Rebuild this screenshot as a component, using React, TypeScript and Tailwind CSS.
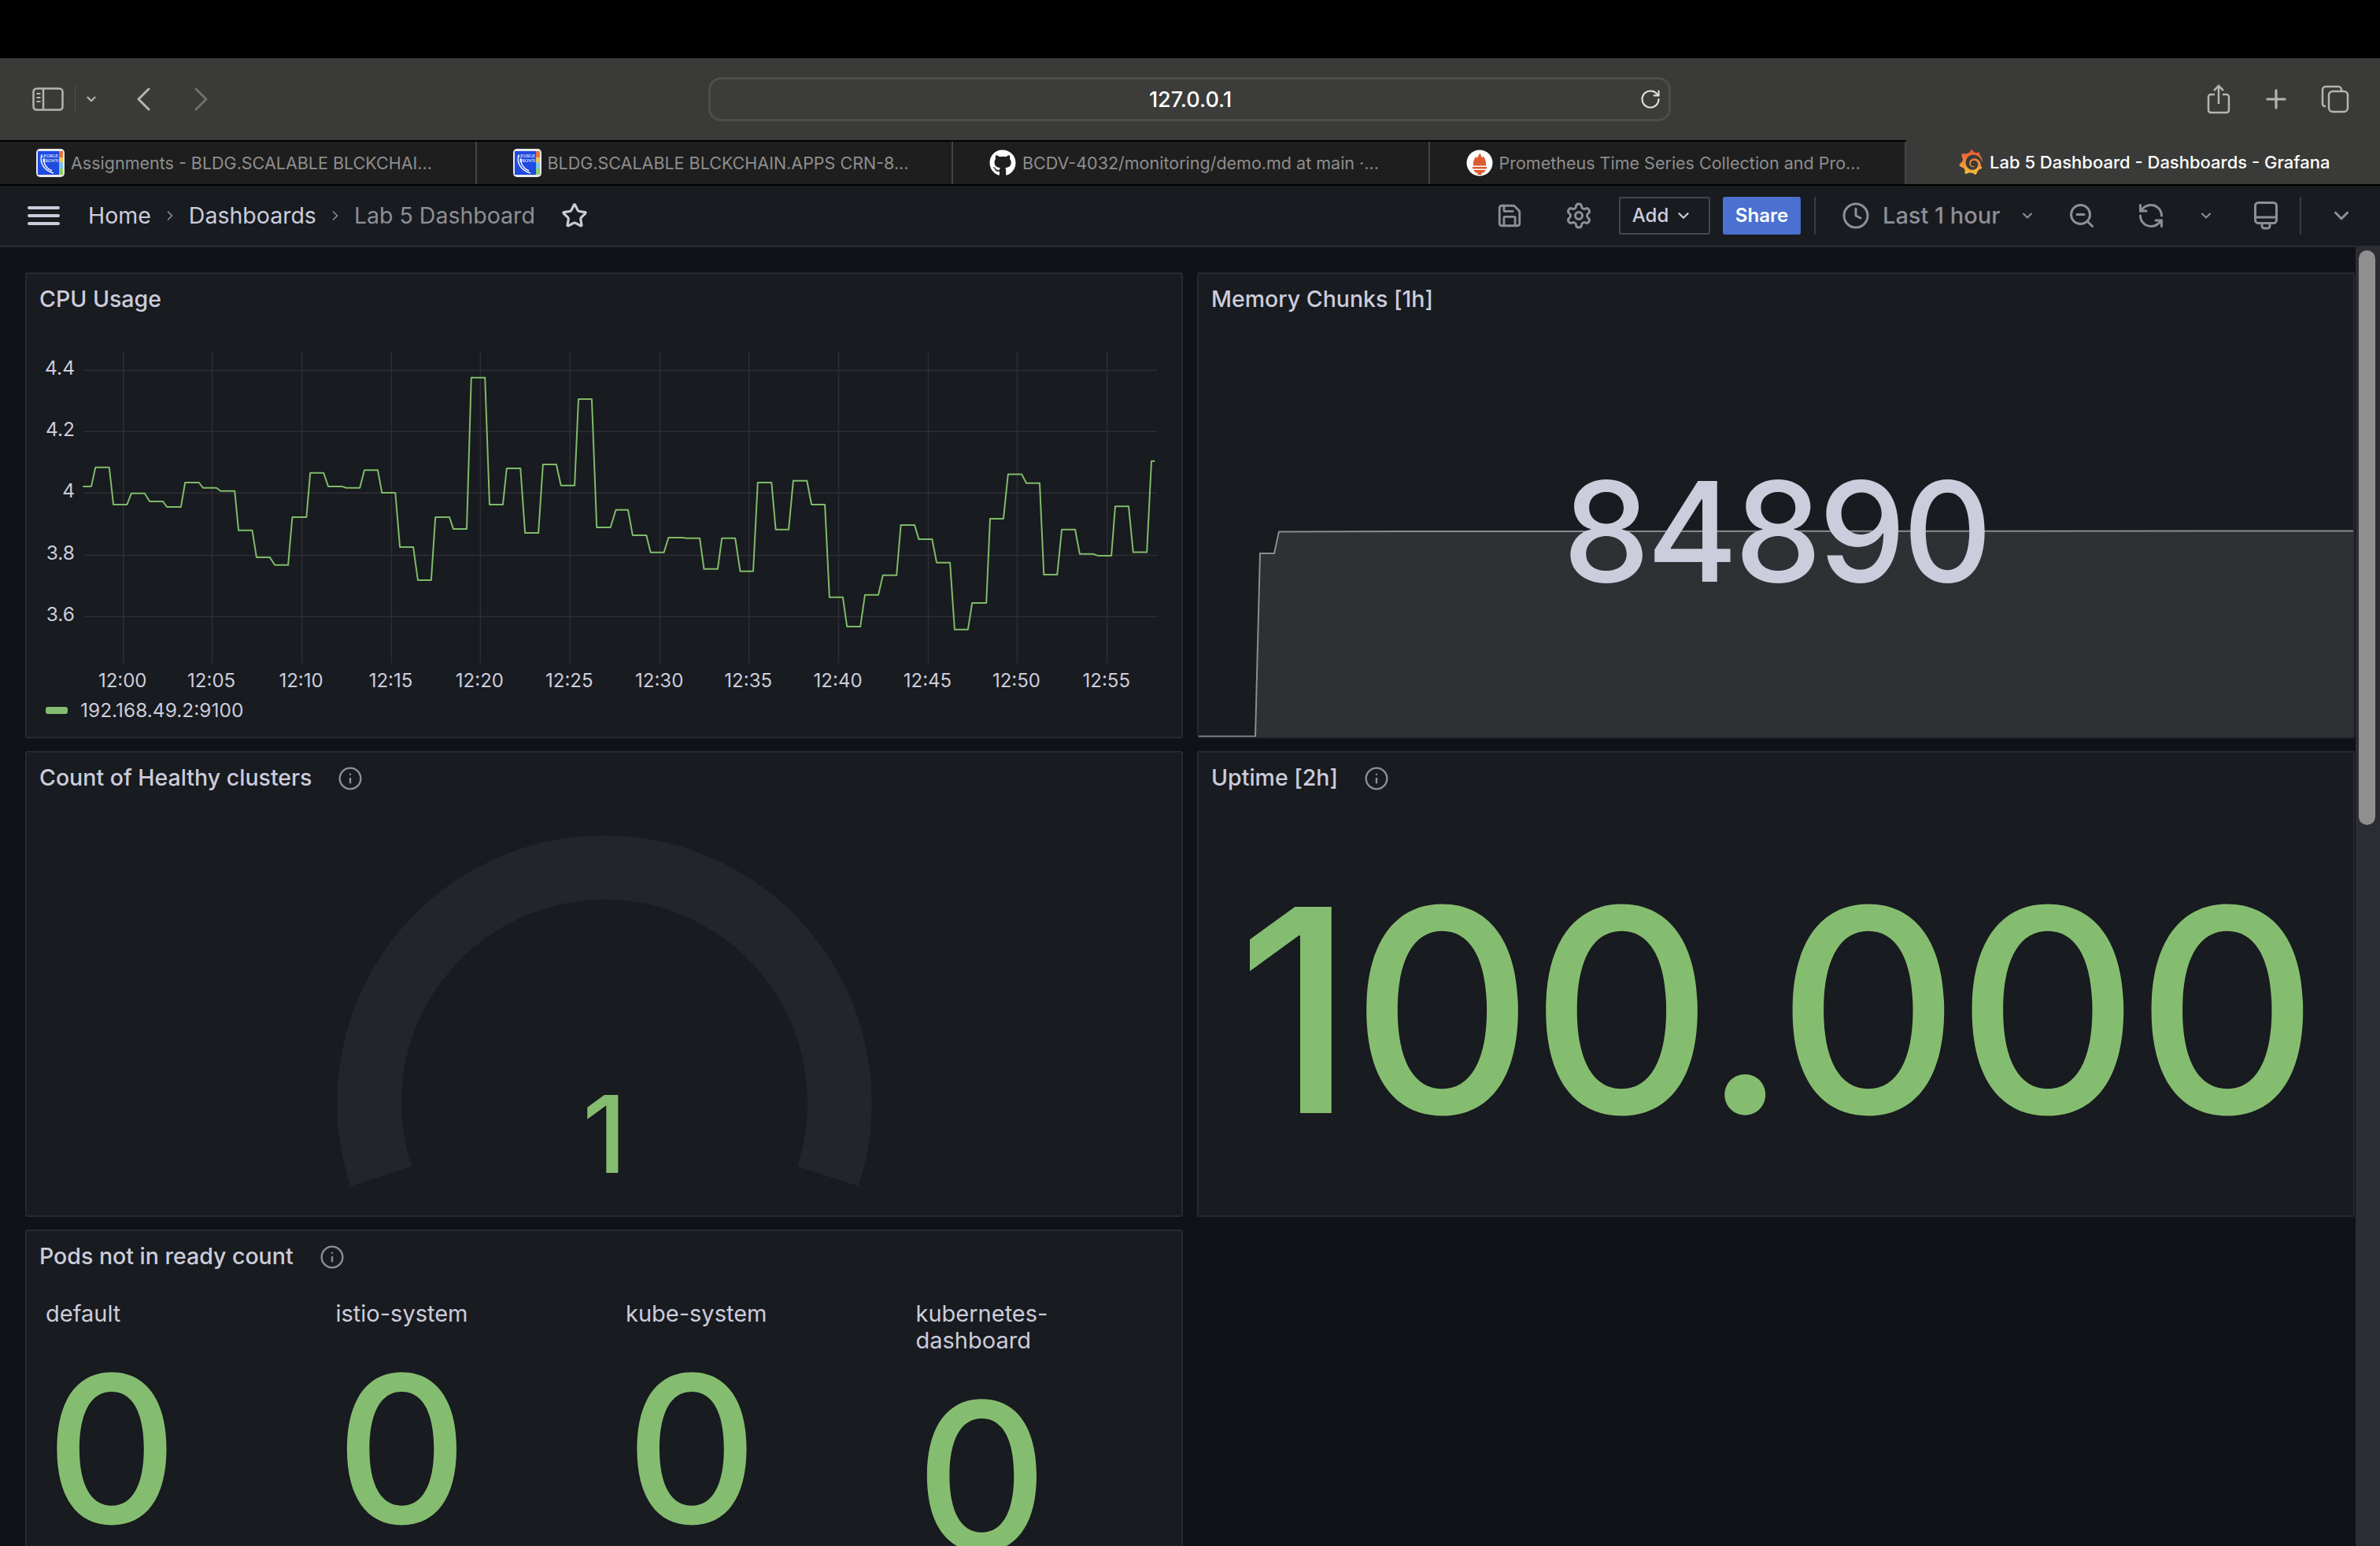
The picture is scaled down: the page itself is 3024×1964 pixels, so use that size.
import { ChevronDown, ChevronRight, Clock, Info, Plus, RefreshCcw, RotateCw, Save, Settings, Star, ZoomOut } from 'lucide-react';
import type { ReactNode } from 'react';
import { FaGithub } from 'react-icons/fa';
import { SiGrafana } from 'react-icons/si';

const GREEN = '#85bd70';

// traced from the cpu graph, measured on the 2.063 x 2.613 crops
const cpuLeft = [176,721,198,721,209,658,245,658,256,781,292,781,303,744,338,744,351,771,386,771,396,789,433,789,444,708,480,708,491,726,526,726,537,736,574,736,584,867,620,867,631,956,666,956,679,982,714,982,725,823,762,823,772,676,807,676,819,721,855,721,866,726,902,726,914,667,949,667,960,742,995,742,1007,922,1042,922,1054,1032,1089,1032,1100,823,1137,823,1147,862,1182,862,1194,360,1230,360,1242,781,1277,781,1287,661,1323,661,1335,875,1370,875,1382,648,1417,648,1429,718,1465,718,1475,431,1510,431,1523,857,1559,857];
const cpuRight = [5,799,37,799,49,883,85,883,96,940,131,940,143,891,180,891,190,893,225,893,236,995,272,995,283,893,318,893,331,1003,365,1003,377,708,413,708,424,864,458,864,470,702,506,702,518,781,553,781,565,1089,600,1089,611,1186,646,1186,658,1081,693,1081,705,1016,741,1016,752,849,788,849,799,896,834,896,846,974,881,974,893,1196,928,1196,939,1108,976,1108,986,828,1021,828,1033,681,1069,681,1081,710,1116,710,1127,1014,1162,1014,1174,864,1209,864,1221,945,1256,945,1268,951,1304,951,1314,787,1349,787,1361,939,1397,939,1409,637,1418,637];

const toX = (z: number) => +(20 + z / 2.063).toFixed(1);
const toY = (z: number) => +(340 + z / 2.613).toFixed(1);

function cpuPoints() {
  const out: string[] = [];
  for (let i = 0; i < cpuLeft.length; i += 2) out.push(`${toX(cpuLeft[i])},${toY(cpuLeft[i + 1])}`);
  for (let i = 0; i < cpuRight.length; i += 2) out.push(`${toX(cpuRight[i] + 1568)},${toY(cpuRight[i + 1])}`);
  return out.join(' ');
}

const yTicks = [
  { label: '4.4', z: 336 },
  { label: '4.2', z: 539 },
  { label: '4', z: 743 },
  { label: '3.8', z: 950 },
  { label: '3.6', z: 1153 },
];
const xTicks = [
  ['12:00', 282], ['12:05', 515], ['12:10', 750], ['12:15', 985], ['12:20', 1218], ['12:25', 1453],
  ['12:30', 1689], ['12:35', 1922], ['12:40', 2157], ['12:45', 2392], ['12:50', 2625], ['12:55', 2861],
] as const;

const tabs = [
  { title: 'Assignments - BLDG.SCALABLE BLCKCHAI...', icon: <GeorgeBrown /> },
  { title: 'BLDG.SCALABLE BLCKCHAIN.APPS CRN-8...', icon: <GeorgeBrown /> },
  { title: 'BCDV-4032/monitoring/demo.md at main ·...', icon: <FaGithub size={34} color="#fff" /> },
  { title: 'Prometheus Time Series Collection and Pro...', icon: <PrometheusLogo /> },
];

function GeorgeBrown() {
  return (
    <svg width="36" height="36" viewBox="0 0 36 36" className="shrink-0">
      <rect width="36" height="36" rx="5" fill="#e8e8e8" />
      <rect x="2" y="3" width="27" height="30" fill="#1f4be0" />
      <rect x="29" y="3" width="5" height="8" fill="#e8743a" />
      <rect x="29" y="11" width="5" height="6" fill="#e9c64a" />
      <rect x="29" y="17" width="5" height="8" fill="#7fc4ee" />
      <rect x="29" y="25" width="5" height="8" fill="#8ed06a" />
      <path d="M7 8c-3 9 2 19 15 23M10 12c-1 7 3 13 10 16" fill="none" stroke="#fff" strokeWidth="1.4" />
      <text x="17" y="11" textAnchor="middle" fontSize="5.5" fontFamily="Liberation Serif, serif" fill="#fff">GEORGE</text>
      <text x="18" y="17" textAnchor="middle" fontSize="5.5" fontFamily="Liberation Serif, serif" fill="#fff">BROWN</text>
    </svg>
  );
}

function PrometheusLogo() {
  return (
    <svg width="34" height="34" viewBox="0 0 34 34" className="shrink-0">
      <circle cx="17" cy="17" r="16.5" fill="#fff" />
      <path d="M17 4c1 3 2.500 3.500 3 6.500 1-.5 1.500-1.500 1.500-2.500 2 3 4 6 3.500 12.500H9c-.5-6 1.500-9 3.500-12 0 1 .5 2 1 2.500C15 8 17 7 17 4z" fill="#dd5b32" />
      <rect x="8" y="22" width="18" height="2.500" fill="#dd5b32" />
      <path d="M9 26h16l-3 3.500h-2.500V32h-5v-2.500H12z" fill="#dd5b32" />
    </svg>
  );
}

function SafariChevron({ flip, className }: { flip?: boolean; className?: string }) {
  return (
    <svg width="18" height="30" viewBox="0 0 18 30" fill="none" stroke="currentColor" strokeWidth="3" strokeLinecap="round" strokeLinejoin="round" className={className}>
      <path d={flip ? 'M3 2l13 13L3 28' : 'M15 2L2 15l13 13'} />
    </svg>
  );
}

function Panel({ title, info, children }: { title: string; info?: boolean; children?: ReactNode }) {
  return (
    <section className="relative flex h-[592px] flex-col overflow-hidden rounded-[3px] border-2 border-[#27292e] bg-[#181b1f]">
      <header className="relative z-10 flex h-[65px] shrink-0 items-center pl-4 text-[28.500px] font-medium text-[#ccccdc]">
        <span>{title}</span>
        {info && <Info size={32} strokeWidth={1.8} className="ml-[33px] text-[#8e8e98]" />}
      </header>
      {children}
    </section>
  );
}

function CpuChart() {
  return (
    <>
      <svg viewBox="34 411 1467 469" className="block h-[469px] w-[1467px] shrink-0 [font-family:Inter,sans-serif]">
        {yTicks.map((t) => (
          <g key={t.label}>
            <line x1={toX(178)} x2={toX(2993)} y1={toY(t.z)} y2={toY(t.z)} stroke="#2d2f34" strokeWidth="1.5" />
            <text x="95" y={toY(t.z)} dy="5.500" textAnchor="end" fontSize="24.500" fill="#ccccdc">{t.label}</text>
          </g>
        ))}
        {xTicks.map(([label, z]) => (
          <g key={label}>
            <line x1={toX(z)} x2={toX(z)} y1={toY(272)} y2={toY(1308)} stroke="#2d2f34" strokeWidth="1.5" />
            <text x={toX(z) - 1} y="871" textAnchor="middle" fontSize="24" fill="#ccccdc">{label}</text>
          </g>
        ))}
        <polyline points={cpuPoints()} fill="none" stroke="#7fbb6a" strokeWidth="2" strokeLinejoin="round" />
      </svg>
      <div className="flex items-center pl-6 text-[24.500px] leading-[40px] text-[#ccccdc]">
        <span className="h-[9px] w-[28px] rounded-[3px] bg-[#85bd70]" />
        <span className="ml-4">192.168.49.2:9100</span>
      </div>
    </>
  );
}

function MemorySpark() {
  return (
    <svg viewBox="1522 348 1468 588" className="absolute left-0 top-0 h-[588px] w-[1468px]">
      <path d="M1521 935.500H1594L1600 703H1618L1624 675.500L1792 675L2991 674.500V936H1521Z" fill="#2f3034" />
      <path d="M1521 935.500H1594L1600 703H1618L1624 675.500L1792 675L2991 674.500" fill="none" stroke="#8b8c8f" strokeWidth="2" />
    </svg>
  );
}

function Gauge() {
  return (
    <svg viewBox="34 1019 1467 525" className="block h-[525px] w-[1467px] [font-family:Inter,sans-serif]">
      <path d="M483 1494A300 300 0 1 1 1053 1494" fill="none" stroke="#22252a" strokeWidth="82" />
      <text x="768" y="1490" textAnchor="middle" fontSize="136" fontWeight="500" fill={GREEN}>1</text>
    </svg>
  );
}

function PodStat({ name }: { name: string }) {
  return (
    <div>
      <div className="w-[200px] text-[29px] leading-[34px] text-[#ccccdc]">{name}</div>
      <div className="mt-[25px] text-[260px] font-medium leading-none" style={{ color: GREEN }}>0</div>
    </div>
  );
}

export default function App() {
  return (
    <div className="flex h-[1964px] w-[3024px] flex-col overflow-hidden bg-[#111217] [font-family:Inter,sans-serif]">
      <svg className="absolute h-0 w-0">
        <defs>
          <linearGradient id="grafana-fill" x1="0" y1="0" x2="0" y2="1">
            <stop offset="0" stopColor="#e8532f" />
            <stop offset="1" stopColor="#f6c23c" />
          </linearGradient>
        </defs>
      </svg>

      <div className="h-[74px] shrink-0 bg-black" />

      {/* safari toolbar */}
      <div className="flex h-[104px] shrink-0 items-center bg-[#3a3a38] text-[#b4b4b2]">
        <div className="flex w-[900px] items-center pl-[41px]">
          <svg width="40" height="30" viewBox="0 0 40 30" fill="none" stroke="#b4b4b2" strokeWidth="2.5">
            <rect x="1.500" y="1.500" width="37" height="27" rx="4" />
            <path d="M14 2v26" />
            <path d="M5.500 8h5M5.500 13h5M5.500 18h5" strokeWidth="2" />
          </svg>
          <span className="ml-[14px] h-[36px] w-[1px] bg-[#4e4e4c]" />
          <ChevronDown size={18} strokeWidth={3} className="ml-[11px]" />
          <SafariChevron className="ml-[49px]" />
          <SafariChevron flip className="ml-[54px] text-[#70706e]" />
        </div>
        <div className="relative flex h-[56px] w-[1223px] items-center justify-center rounded-[16px] border-[3px] border-[#4d4d4b] bg-[#3c3c3a] pl-[2px] pt-[2px] text-[27px] font-medium text-white">
          127.0.0.1
          <RotateCw size={28} strokeWidth={1.8} className="absolute right-[9px] top-[11px] text-[#dededc]" />
        </div>
        <div className="flex flex-1 items-center pl-[681px]">
          <svg width="30" height="38" viewBox="0 0 30 38" fill="none" stroke="#b4b4b2" strokeWidth="2.5">
            <path d="M10 13H5a3 3 0 0 0-3 3v17a3 3 0 0 0 3 3h20a3 3 0 0 0 3-3V16a3 3 0 0 0-3-3h-5" />
            <path d="M15 25V2M9 8l6-6 6 6" />
          </svg>
          <Plus size={38} strokeWidth={2} className="ml-[39px]" />
          <svg width="36" height="36" viewBox="0 0 36 36" fill="none" stroke="#b4b4b2" strokeWidth="2.5" className="ml-[38px]">
            <rect x="10" y="8" width="24" height="26" rx="5" />
            <path d="M6 27H5a3 3 0 0 1-3-3V6a4 4 0 0 1 4-4h16a4 4 0 0 1 4 4v1" />
          </svg>
        </div>
      </div>

      {/* tab strip */}
      <div className="flex h-[56px] shrink-0 border-t-2 border-black bg-[#1e1e1e] text-[22px]">
        {tabs.map((t) => (
          <div key={t.title} className="flex w-[605.500px] items-center border-r-2 border-[#444] pl-[46px] text-[21.500px] text-[#8e8e8e]">
            {t.icon}
            <span className="ml-2 whitespace-nowrap">{t.title}</span>
          </div>
        ))}
        <div className="-mt-[2px] flex flex-1 items-center bg-[#3a3a38] pl-[66px] font-medium text-white">
          <SiGrafana size={32} fill="url(#grafana-fill)" />
          <span className="ml-2 whitespace-nowrap">Lab 5 Dashboard - Dashboards - Grafana</span>
        </div>
      </div>

      {/* grafana nav */}
      <div className="flex h-[80px] shrink-0 items-center border-b-2 border-t-2 border-[#000] border-b-[#2a2c31] bg-[#181b1f] text-[28.500px] text-[#ccccdc]">
        <div className="flex w-[1904px] items-center pl-[35px]">
          <span className="flex h-[24px] w-[41px] flex-col justify-between">
            <i className="h-[4px] rounded-sm bg-[#ccccdc]" />
            <i className="h-[4px] rounded-sm bg-[#ccccdc]" />
            <i className="h-[4px] rounded-sm bg-[#ccccdc]" />
          </span>
          <span className="ml-[36px]">Home</span>
          <ChevronRight size={20} className="mx-[14px] text-[#8e8e98]" />
          <span>Dashboards</span>
          <ChevronRight size={20} className="mx-[14px] text-[#8e8e98]" />
          <span className="text-[#8e8e98]">Lab 5 Dashboard</span>
          <Star size={34} strokeWidth={2.2} className="ml-[33px] text-[#ccccdc]" />
        </div>
        <div className="flex flex-1 items-center text-[#8e8e98]">
          <Save size={34} strokeWidth={2} className="-mx-[3px]" />
          <Settings size={36} strokeWidth={2} className="-mx-[3px] ml-[56px]" />
          <div className="ml-[36px] flex h-[48px] w-[116px] items-center justify-center gap-[8px] rounded-[3px] border-2 border-[#46474c] pr-[6px] text-[24px] font-medium text-[#ccccdc]">
            Add <ChevronDown size={22} strokeWidth={2.5} />
          </div>
          <div className="ml-[16px] flex h-[48px] w-[99px] items-center justify-center rounded-[3px] bg-[#4a70d0] text-[24px] font-semibold text-white">Share</div>
          <span className="ml-[17px] h-[48px] w-[2px] bg-[#3a3c41]" />
          <Clock size={36} strokeWidth={2} className="-mx-[3px] ml-[33px]" />
          <span className="ml-[19px] text-[29px] font-medium">Last 1 hour</span>
          <ChevronDown size={20} strokeWidth={2.5} className="ml-[25px]" />
          <ZoomOut size={36} strokeWidth={2} className="ml-[41px]" />
          <RefreshCcw size={36} strokeWidth={2} className="ml-[52px]" />
          <ChevronDown size={20} strokeWidth={2.5} className="ml-[42px]" />
          <svg width="30" height="36" viewBox="0 0 30 36" fill="none" stroke="currentColor" strokeWidth="3" className="ml-[51px]">
            <rect x="1.500" y="1.500" width="27" height="26" rx="4" />
            <path d="M2 20h26" />
            <path d="M10 28v3a3 3 0 0 0 3 3h4a3 3 0 0 0 3-3v-3" />
          </svg>
          <span className="ml-[28px] h-[48px] w-[2px] bg-[#3a3c41]" />
          <ChevronDown size={30} strokeWidth={2.5} className="ml-[36px]" />
        </div>
      </div>

      {/* dashboard */}
      <main className="relative flex-1 overflow-hidden pl-[32px] pt-[32px]">
        <div className="grid grid-cols-[1471px_1471px] gap-x-[18px] gap-y-[16px]">
          <Panel title="CPU Usage">
            <CpuChart />
          </Panel>
          <Panel title="Memory Chunks [1h]">
            <MemorySpark />
            <div className="relative flex flex-1 items-center justify-center text-[176px] font-medium leading-none tracking-[-4px] text-[#ccccdc]">84890</div>
          </Panel>
          <Panel title="Count of Healthy clusters" info>
            <Gauge />
          </Panel>
          <Panel title="Uptime [2h]" info>
            <div className="flex flex-1 items-center justify-center text-[360px] font-medium leading-none tracking-[-4.400px]" style={{ color: GREEN }}>100.000</div>
          </Panel>
          <Panel title="Pods not in ready count" info>
            <div className="grid grid-cols-[repeat(4,368.500px)] pl-6 pt-[23px]">
              <PodStat name="default" />
              <PodStat name="istio-system" />
              <PodStat name="kube-system" />
              <PodStat name="kubernetes-dashboard" />
            </div>
          </Panel>
        </div>
        <div className="absolute bottom-0 right-0 top-0 w-[31px] bg-[#2c2d32] pl-[4px] pt-[4px]">
          <div className="h-[730px] w-[21px] rounded-full bg-[#8f8f8f]" />
        </div>
      </main>
    </div>
  );
}
